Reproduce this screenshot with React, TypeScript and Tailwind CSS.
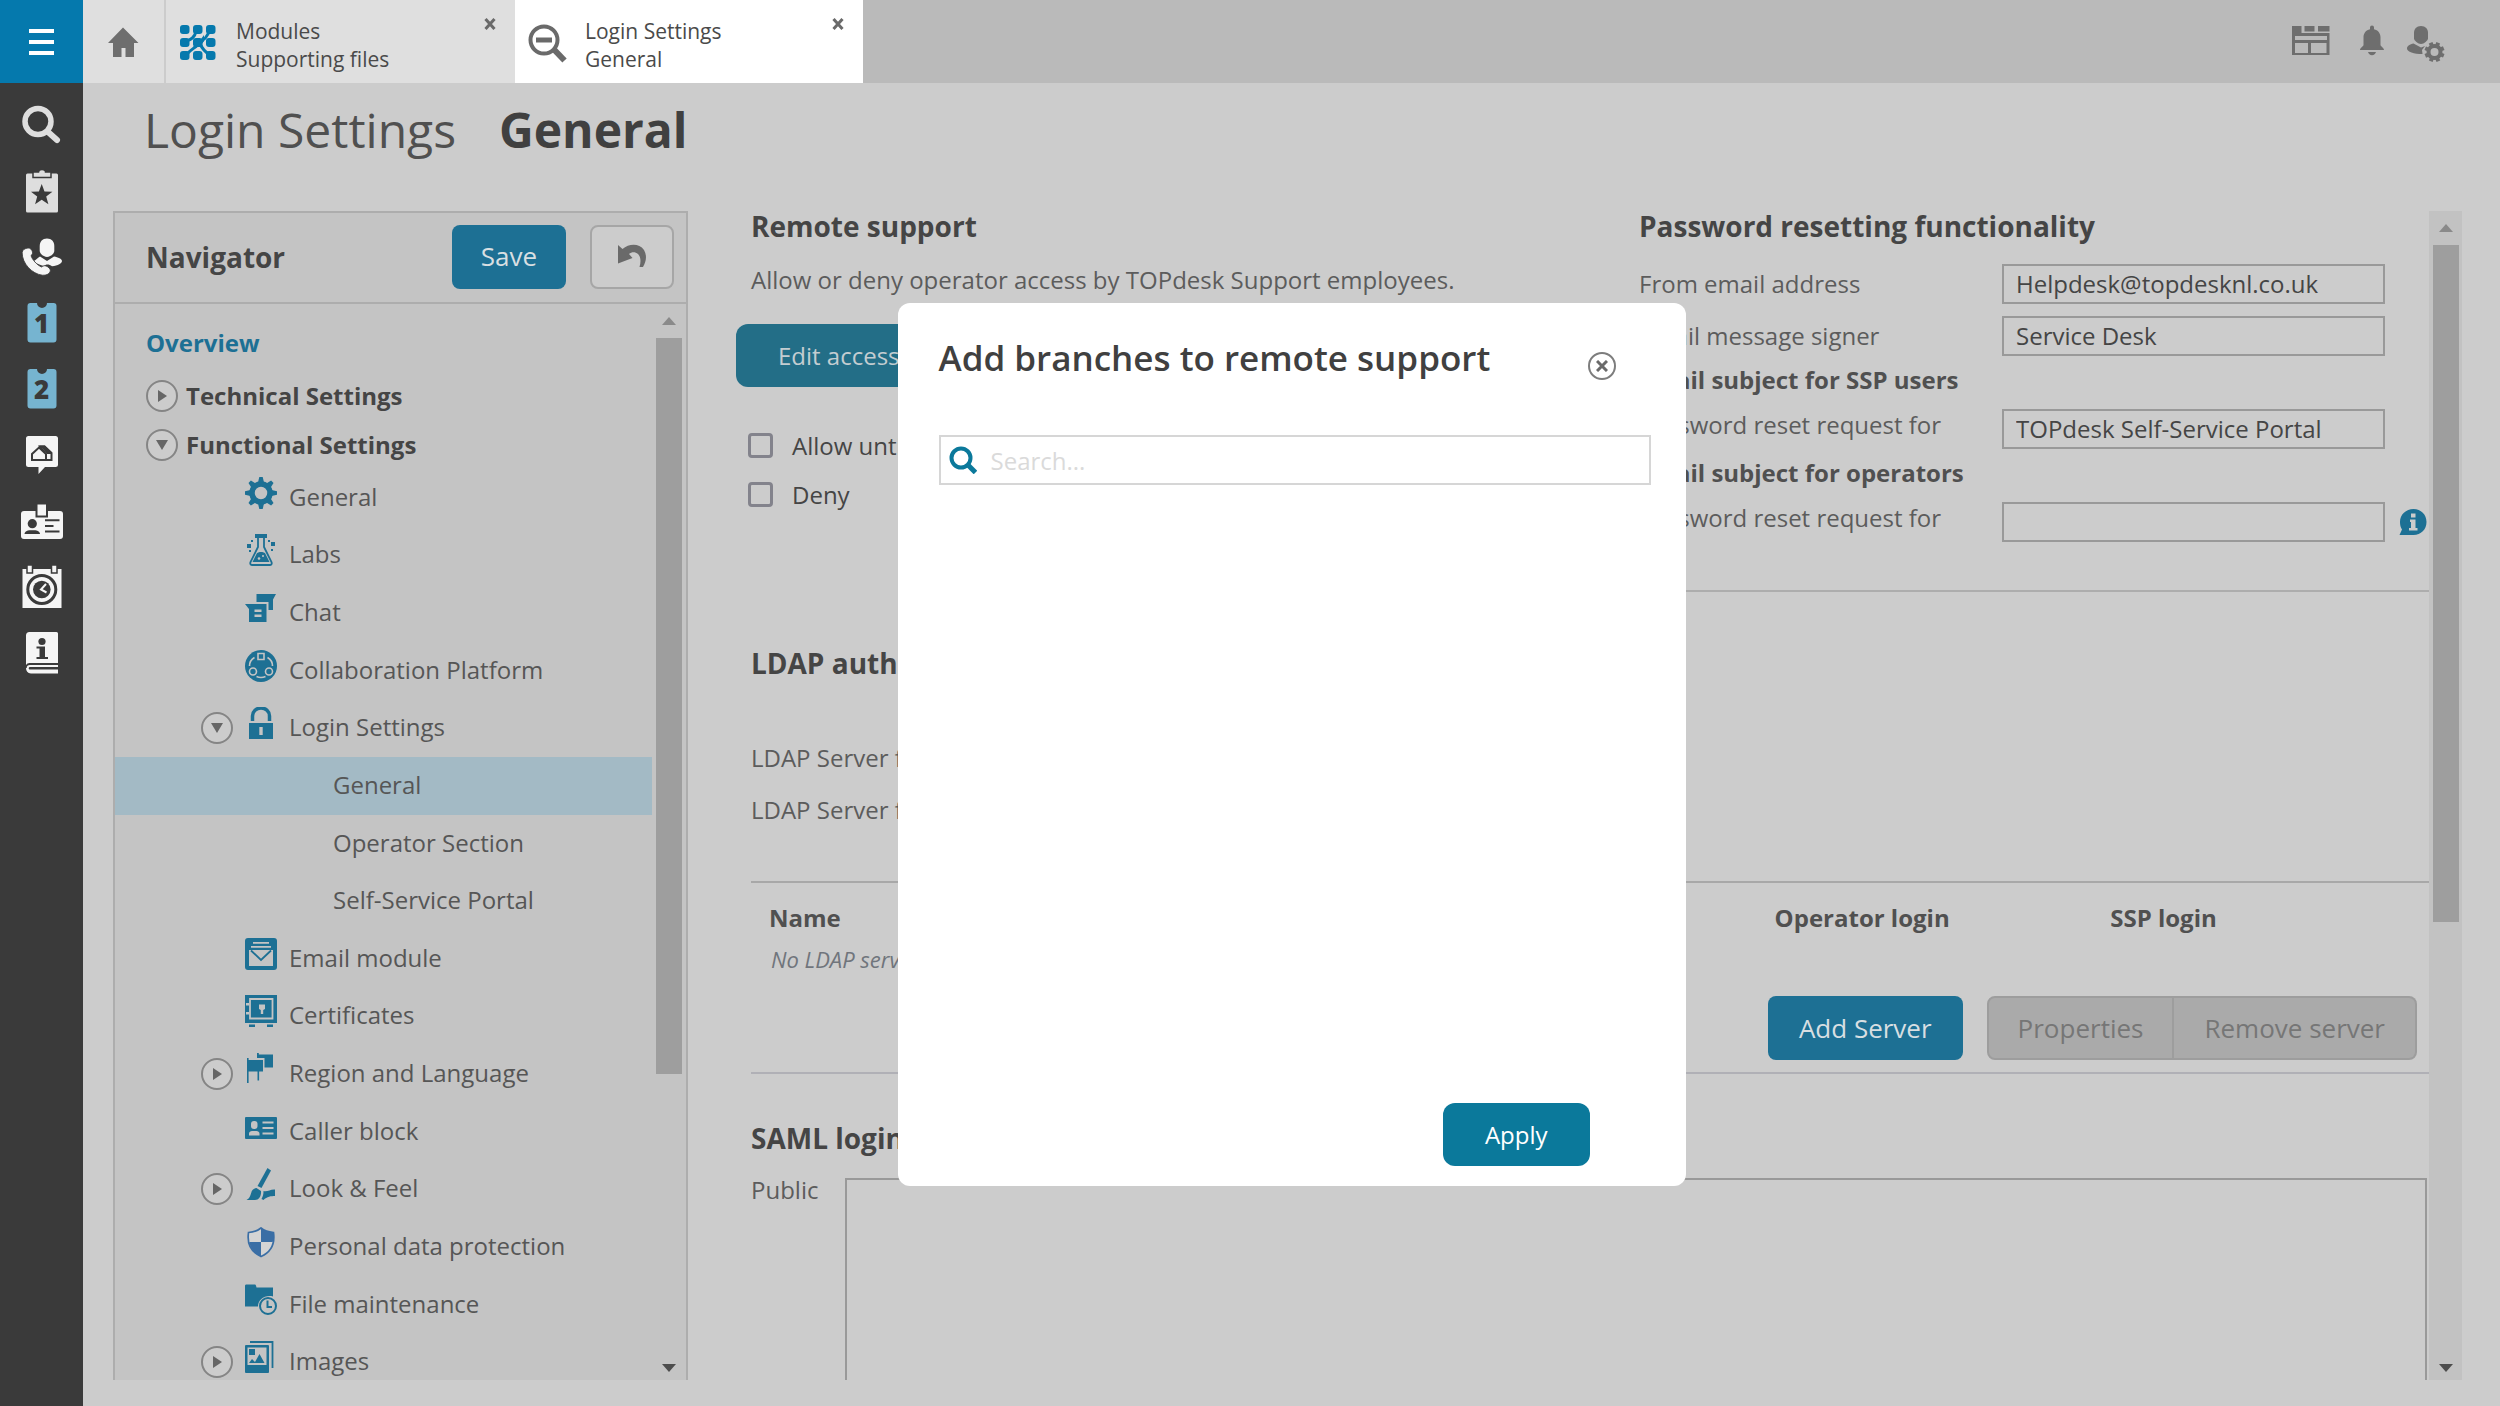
import React, { useState } from 'react';

const Svg = ({ size, className, children }: { size: number; className?: string; children: React.ReactNode }) => (
  <svg viewBox={`0 0 ${size} ${size}`} width={size} height={size} fill="currentColor" className={`shrink-0 ${className ?? ''}`} aria-hidden="true">
    {children}
  </svg>
);

const DARK = '#3a3a3a';
const PANEL = '#c4c4c4';

/* ---------- Left rail icons (44px grid) ---------- */

const ticketPath = 'M10.500 2H17a5 5 0 0 0 10 0h6.500a3 3 0 0 1 3 3v33.500a3 3 0 0 1-3 3h-23a3 3 0 0 1-3-3V5a3 3 0 0 1 3-3z';

const Ticket = ({ label }: { label: string }) => (
  <>
    <path d={ticketPath} />
    <text x="21.500" y="32" textAnchor="middle" fontSize="26" fontWeight="800" fill={DARK}>{label}</text>
  </>
);

const railItems = [
  {
    name: 'Search',
    color: 'text-[#dedede]',
    icon: (
      <g fill="none" stroke="currentColor">
        <circle cx="18" cy="18.500" r="13" strokeWidth="5.500" />
        <path d="M27.500 28.500l9.500 8.500" strokeWidth="6" strokeLinecap="round" />
      </g>
    ),
  },
  {
    name: 'Bookmarks',
    color: 'text-[#dedede]',
    icon: (
      <>
        <rect x="6" y="4.500" width="32" height="39" rx="1.500" />
        <path d="M13 3h5.500a3.500 2.500 0 0 1 7 0H31v5.500H13z" stroke={DARK} strokeWidth="1.500" />
        <path d="M21.700 15l2.800 7.400 7.900.3-6.200 4.900 2.200 7.700-6.700-4.500-6.600 4.500 2.100-7.700-6.200-4.900 7.900-.3z" fill={DARK} />
      </>
    ),
  },
  {
    name: 'Call management',
    color: 'text-[#f5f5f5]',
    icon: (
      <>
        <path d="M27 3.500c4.500 0 7.300 3 7.300 7.500v5c0 2.500-4 6-7.300 6s-7.300-3.500-7.300-6v-5c0-4.500 2.800-7.500 7.300-7.500z" />
        <path d="M20 21.500l7 4.500 7-4.500c4 .8 8 2.300 8 4.500s-4 5-10 5.200c-3-2.400-6-2.200-8.500-.2-4-1.500-7.500-2.500-9.500-5 2-1.300 4-3.500 6-4.500z" />
        <path d="M8 13c1.800-.3 4 1.500 4.500 4 .3 1.700-.3 2.700-1.500 3.500 1 4 6 9.500 10.500 11.500 1.800-1.500 4-1.700 6-.3 2.300 1.500 3.500 3.300 2.500 5.300-1 2.200-4 3.500-7.500 3.200C12 39 2 28.500 2.200 17.500 2.500 14.700 5 13.400 8 13z" stroke={DARK} strokeWidth="0.800" />
      </>
    ),
  },
  { name: 'First line', color: 'text-[#76b4d0]', icon: <Ticket label="1" /> },
  { name: 'Second line', color: 'text-[#76b4d0]', icon: <Ticket label="2" /> },
  {
    name: 'Facilities',
    color: 'text-[#f5f5f5]',
    icon: (
      <>
        <path d="M8.500 3h27a2.500 2.500 0 0 1 2.500 2.500v26a2.500 2.500 0 0 1-2.500 2.500H25l-6.500 7v-7h-10A2.500 2.500 0 0 1 6 31.500v-26A2.500 2.500 0 0 1 8.500 3z" />
        <path d="M12 27v-6l7-6.500 7 6.500v6zM26 27v-6l-6-7.500h4.500L31.500 20v7z" fill="none" stroke={DARK} strokeWidth="2" />
        <path d="M19 12.500h6l6.500 6.500v2H27l-5-6z" fill={DARK} />
      </>
    ),
  },
  {
    name: 'Visitors',
    color: 'text-[#f5f5f5]',
    icon: (
      <>
        <rect x="1" y="12" width="42" height="28" rx="3" />
        <rect x="16.500" y="4.500" width="10.500" height="13" stroke={DARK} strokeWidth="2" />
        <g fill={DARK}>
          <circle cx="12.300" cy="24.700" r="4.600" />
          <path d="M4.500 35c0-2.500 3-3.800 5.500-3.800h4.500c2.500 0 5.500 1.300 5.500 3.800z" />
          <path d="M25 20.300h14.500v2H25zM25 26h8.500v2H25zM25 31.500h14.500v2H25z" />
        </g>
      </>
    ),
  },
  {
    name: 'Planning',
    color: 'text-[#f5f5f5]',
    icon: (
      <>
        <path d="M2.500 4h39v39h-39z" />
        <path d="M7 0h5.500v8H7zM31.500 0H37v8h-5.500z" stroke={DARK} strokeWidth="1.500" />
        <circle cx="21.800" cy="24.500" r="14" fill="none" stroke={DARK} strokeWidth="3" />
        <circle cx="21.800" cy="24.500" r="8.800" fill={DARK} />
        <path d="M26 19l-5 5.500 5.500 3" fill="none" stroke="currentColor" strokeWidth="2" />
      </>
    ),
  },
  {
    name: 'Knowledge base',
    color: 'text-[#f5f5f5]',
    icon: (
      <>
        <path d="M9.500 1h27A1.500 1.500 0 0 1 38 2.500V32H9.500a4 4 0 0 0-3.500 2V4.500A3.500 3.500 0 0 1 9.500 1z" />
        <path d="M38 35H10a2.300 2.300 0 0 0 0 4.600h28M38 41.500H11a4.500 4.500 0 0 1-4-4.500" fill="none" stroke="currentColor" strokeWidth="2" />
        <g fill={DARK}>
          <circle cx="22" cy="10.500" r="3.600" />
          <path d="M16.500 15.500H25V26h3v2H16.500v-2h3v-8.500h-3z" />
        </g>
      </>
    ),
  },
];

/* ---------- Navigator icons (32px grid) ---------- */

const treeIcons: Record<string, React.ReactNode> = {
  gear: (
    <>
      <circle cx="16" cy="16" r="9" fill="none" stroke="currentColor" strokeWidth="5.500" />
      {[0, 45, 90, 135, 180, 225, 270, 315].map(a => (
        <path key={a} d="M13 5.500L14.300 0h3.400L19 5.500z" transform={`rotate(${a} 16 16)`} />
      ))}
    </>
  ),
  labs: (
    <>
      <path d="M10 0h12v4H10z" />
      <path d="M13 4v9L5.500 28c-.7 1.800.2 3 1.800 3h17.400c1.600 0 2.500-1.200 1.800-3L19 13V4" fill="none" stroke="currentColor" strokeWidth="1.800" />
      <path d="M12 19c2-1.500 6-1.500 8 0l4.500 9h-17z" />
      <circle cx="14" cy="24.500" r="1.300" fill={PANEL} />
      <circle cx="18" cy="22" r="1" fill={PANEL} />
      <path d="M2 10h4v4H2zM26 8h4v4h-4zM6 6h2v2H6zM23 6h2v2h-2zM4 16h2v2H4zM26 15h2v2h-2z" />
    </>
  ),
  chat: (
    <>
      <path d="M11.500 2H31l-3 5.500V18h-4.500V10h-12z" />
      <path d="M0 12h21.500v18H4V17z" />
      <path d="M9.500 17.500h7v2.500h-7zM9.500 22.500h7V25h-7z" fill={PANEL} />
    </>
  ),
  collab: (
    <>
      <circle cx="16" cy="16" r="16" />
      <g fill="none" stroke={PANEL} strokeWidth="1.600">
        <path d="M13 3.500h6v6h-6zM9.500 7.500C6 9.500 4.500 13 4.500 16M22.500 7.500C26 9.500 27.500 13 27.500 16M11.500 26.500c3 1.300 6 1.300 9 0" />
        <circle cx="8" cy="21.500" r="3.500" />
        <circle cx="24" cy="21.500" r="3.500" />
      </g>
    </>
  ),
  lock: (
    <>
      <path d="M7.500 14V9a8.500 8 0 0 1 17 0v5" fill="none" stroke="currentColor" strokeWidth="3.500" />
      <path d="M4 16h24v16H4z" />
      <path d="M14.300 20h3.400v8h-3.400z" fill={PANEL} />
    </>
  ),
  email: (
    <>
      <rect width="32" height="32" rx="3" />
      <path d="M8 4h16v1.800H8zM6 8h20v1.800H6zM4 12h24v16H4z" fill={PANEL} />
      <path d="M6 12.500l10 9.500 10-9.500" fill="none" stroke="currentColor" strokeWidth="1.800" />
    </>
  ),
  safe: (
    <>
      <path d="M0 0h32v28H0z" />
      <path d="M5 4h22.500v19.500H5z" fill="none" stroke={PANEL} strokeWidth="1.800" />
      <path d="M1 8h3v2.500H1zM1 17h3v2.500H1zM14 9.500h6v4.500l-1.800 1v4h-2.400v-4L14 14z" fill={PANEL} />
      <path d="M4 29.500h6V32H4zM22 29.500h6V32h-6z" />
    </>
  ),
  flags: (
    <>
      <path d="M12 0h1.800v1.500H28v13h-8.500V5H12z" />
      <path d="M2 5h1.600v2H18v11.500H3.600V30H2zM12.500 18.500h1.600v9h-1.600z" />
    </>
  ),
  card: (
    <>
      <rect y="6" width="32" height="22" rx="1" />
      <g fill={PANEL}>
        <rect x="6" y="10" width="6.500" height="8" rx="3" />
        <path d="M4 24.500v-2c0-1.500 1.500-2.500 3-2.500h4.500c1.500 0 3 1 3 2.500v2zM17.500 10.500h11v2h-11zM17.500 16h11v2h-11zM17.500 21.500h11v2h-11z" />
      </g>
    </>
  ),
  brush: (
    <>
      <path d="M22.500 0L26 2.500 16.500 20 12.500 18z" />
      <path d="M11.500 20l4.500 3c.5 5-2 9-6 9H1.500c3-1.500 3.500-3.500 4.500-6.500.8-3.500 2.500-5 5.500-5.500z" />
      <path d="M18.500 23c4 1 7-2 11.500-1.500V28c-4 0-8 .5-11.500 4l-2-1c1.500-2.500 2-5 2-8z" />
    </>
  ),
  shield: (
    <>
      <path d="M16 2c3.500 3 7.500 4.200 12.500 4.500C30 17 26 26 16 30.500 6 26 2 17 3.500 6.500 8.500 6.200 12.500 5 16 2z" fill="#d4d4d4" stroke="#3a6ea5" strokeWidth="1.700" />
      <path d="M16 2c3.500 3 7.500 4.200 12.500 4.500.4 3.700 0 6.500-.8 9.500H16zM16 16v14.500C9 27.500 5.500 22.500 4.200 16z" fill="#3a6ea5" />
    </>
  ),
  folder: (
    <>
      <path d="M0 2c0-1 .5-1.500 1.500-1.500h8c1 0 1.500.5 2 3H28v9c-8-2-15 3-15 10H0z" />
      <circle cx="23" cy="22" r="8" fill="none" stroke="currentColor" strokeWidth="2" />
      <path d="M22.500 16.500V23H27" fill="none" stroke="currentColor" strokeWidth="2" />
    </>
  ),
  images: (
    <>
      <path d="M5 1h22.500v26" fill="none" stroke="currentColor" strokeWidth="1.800" />
      <rect y="4" width="24" height="28" rx="1" />
      <path d="M2.500 6.500h19V24h-19z" fill={PANEL} />
      <path d="M4 8h6v6H4zM4 22l3-4 3 3 4.500-8 5 9z" />
    </>
  ),
};

interface TreeItem {
  label: string;
  icon?: string;
  state?: 'open' | 'closed';
  selected?: boolean;
}

const treeItems: TreeItem[] = [
  { label: 'General', icon: 'gear' },
  { label: 'Labs', icon: 'labs' },
  { label: 'Chat', icon: 'chat' },
  { label: 'Collaboration Platform', icon: 'collab' },
  { label: 'Login Settings', icon: 'lock', state: 'open' },
  { label: 'General', selected: true },
  { label: 'Operator Section' },
  { label: 'Self-Service Portal' },
  { label: 'Email module', icon: 'email' },
  { label: 'Certificates', icon: 'safe' },
  { label: 'Region and Language', icon: 'flags', state: 'closed' },
  { label: 'Caller block', icon: 'card' },
  { label: 'Look & Feel', icon: 'brush', state: 'closed' },
  { label: 'Personal data protection', icon: 'shield' },
  { label: 'File maintenance', icon: 'folder' },
  { label: 'Images', icon: 'images', state: 'closed' },
];

const Toggle = ({ open, label }: { open: boolean; label: string }) => (
  <button aria-label={`Toggle ${label}`} aria-expanded={open} className="flex size-8 shrink-0 items-center justify-center rounded-full border-2 border-[#858585] bg-[#cccccc] text-[#666666]">
    <Svg size={12}>
      {open ? <path d="M0 1h12L6 11z" /> : <path d="M2 0v12l9-6z" />}
    </Svg>
  </button>
);

const Arrow = ({ down }: { down?: boolean }) => (
  <svg viewBox="0 0 14 8" width="14" height="8" fill={down ? '#4d4d4d' : '#8a8a8a'} aria-hidden="true">
    {down ? <path d="M0 0h14L7 8z" /> : <path d="M7 0l7 8H0z" />}
  </svg>
);

const Rail = () => (
  <aside className="flex w-[83px] shrink-0 flex-col bg-[#3a3a3a]">
    <button aria-label="Menu" className="flex h-[83px] flex-col items-center justify-center gap-[7px] bg-[#0579ad]">
      <span className="h-1 w-[25px] bg-white" />
      <span className="h-1 w-[25px] bg-white" />
      <span className="h-1 w-[25px] bg-white" />
    </button>
    <nav className="flex flex-col pt-[9px]">
      {railItems.map(item => (
        <a key={item.name} href="#" aria-label={item.name} className={`flex h-[66px] items-center justify-center ${item.color}`}>
          <Svg size={44}>{item.icon}</Svg>
        </a>
      ))}
    </nav>
  </aside>
);

const CloseTab = ({ label }: { label: string }) => (
  <button aria-label={label} className="mt-[18px] mr-[19px] size-3 text-[#6a6a6a]">
    <Svg size={12}>
      <path d="M1.500 1l9 10M10.500 1l-9 10" stroke="currentColor" strokeWidth="3" />
    </Svg>
  </button>
);

const TopBar = () => (
  <header className="flex h-[83px] shrink-0 bg-[#bababa] text-[21px] leading-7 text-[#4a4a4a]">
    <a href="#" aria-label="Home" className="flex w-[83px] items-center justify-center border-r-2 border-[#cccccc] bg-[#dfdfdf] text-[#6e6e6e]">
      <Svg size={32}>
        <path d="M15 1.500L30.500 17H26v14h-8.500v-9h-4v9H5V17H0z" />
      </Svg>
    </a>
    <div className="flex w-[349px] items-start bg-[#dfdfdf]">
      <Svg size={36} className="mt-6 ml-[14px] text-[#0579ad]">
        {[0, 1, 2].map(col => [0, 1, 2].map(row => (
          <rect key={`${col}-${row}`} x={col * 13} y={row * 13 + 1} width="9.500" height="9" rx="3" />
        )))}
        <path d="M16 7.500c-1 5-5 9-10 9.500M31 6c-3 2-4 8-8 10l-4 3c-2 4-8 6-12 11M20 20c2 4 5 8 9 10" fill="none" stroke="currentColor" strokeWidth="3" />
        <path d="M14 15h7l3-4v6l-2 3 2 5-5-3-7 4 2-4z" />
      </Svg>
      <a href="#" className="mt-[17px] ml-5 flex flex-1 flex-col">
        <span>Modules</span>
        <span>Supporting files</span>
      </a>
      <CloseTab label="Close Modules" />
    </div>
    <div className="flex w-[348px] items-start bg-white">
      <Svg size={40} className="mt-6 ml-[13px] text-[#6a6a6a]">
        <circle cx="16" cy="16" r="13.500" fill="none" stroke="currentColor" strokeWidth="4" />
        <path d="M8 13.500h16v5H8z" />
        <path d="M26 25.500l10.500 11" stroke="currentColor" strokeWidth="6" />
      </Svg>
      <a href="#" className="mt-[17px] ml-[17px] flex flex-1 flex-col">
        <span>Login Settings</span>
        <span>General</span>
      </a>
      <CloseTab label="Close Login Settings" />
    </div>
    <div className="ml-auto flex items-start gap-7 pt-6 pr-[54px] text-[#6e6e6e]">
      <button aria-label="Layout">
        <Svg size={40}>
          <path d="M2 2h9.500v7H39.500v22H2zM5 12v4h32v-4zM5 19v10h13V19zM21 19v10h15.500V19z" fillRule="evenodd" />
          <path d="M14.500 2h10v5.500h-10zM28 2h11.500v5.500H28z" />
        </Svg>
      </button>
      <button aria-label="Notifications">
        <svg viewBox="0 0 28 40" width="28" height="40" fill="currentColor" aria-hidden="true">
          <path d="M12 3.500a2 2 0 0 1 4 0v1.700c4 .8 6.500 4 6.500 8V21c0 1.500 3.500 2.500 3.500 5H2c0-2.500 3.500-3.500 3.500-5v-7.800c0-4 2.500-7.200 6.500-8zM10 28h8c-.5 2-2 3.200-4 3.200S10.500 30 10 28z" />
        </svg>
      </button>
      <button aria-label="User settings" className="-ml-2">
        <Svg size={40}>
          <path d="M15 2c4.500 0 7 3 7 7v5.500c0 2-4 5.500-7 5.500s-7-3.500-7-5.500V9c0-4 2.500-7 7-7z" />
          <path d="M7.500 19.500l7.500 4 4-1.500-3 4 .5 4C8 30 1 28 1 24.500c0-2.500 3-4.200 6.500-5z" />
          <circle cx="28.500" cy="28" r="6" fill="none" stroke="currentColor" strokeWidth="4" />
          {[0, 45, 90, 135, 180, 225, 270, 315].map(a => (
            <path key={a} d="M26.500 18h4v4h-4z" transform={`rotate(${a + 22} 28.500 28)`} />
          ))}
        </Svg>
      </button>
    </div>
  </header>
);

const Navigator = () => (
  <section className="flex w-[575px] shrink-0 flex-col border-2 border-b-0 border-[#adadad] bg-[#c4c4c4]">
    <div className="flex h-[91px] shrink-0 items-center border-b-2 border-[#adadad] pr-3 pb-[2px] pl-[31px]">
      <h2 className="flex-1 text-[28px] font-bold text-[#454545]">Navigator</h2>
      <button className="h-16 rounded-lg bg-[#1d7094] px-[29px] text-[26px] text-[#d8dfe2]">Save</button>
      <button aria-label="Undo" className="ml-6 flex h-16 w-[84px] items-center justify-center rounded-lg border-2 border-[#a6a6a6] bg-[#cccccc] text-[#6a6a6a]">
        <Svg size={28}>
          <path d="M0 2l4.500 4C11 .5 21 0 26 7c3 5 2.500 11-1 17h-3.500c1.500-5 1.500-10-1.500-13-3-2.500-6.500-2-9 0l3.500 4L0 20.500z" />
        </Svg>
      </button>
    </div>
    <div className="flex min-h-0 flex-1">
      <nav className="min-w-0 flex-1 overflow-hidden pt-[10px] text-2xl text-[#565656]">
        <a href="#" className="flex h-[58px] items-center pl-[31px] font-bold text-[#1d7094]">Overview</a>
        <div className="flex h-12 items-center gap-2 pl-[31px] font-bold text-[#454545]">
          <Toggle open={false} label="Technical Settings" />
          <a href="#">Technical Settings</a>
        </div>
        <div className="flex h-[49px] items-center gap-2 pl-[31px] font-bold text-[#454545]">
          <Toggle open label="Functional Settings" />
          <a href="#">Functional Settings</a>
        </div>
        <ul className="grid h-[922px] auto-rows-fr">
          {treeItems.map((item, i) => (
            <li key={i} className={`flex items-center pl-[86px] ${item.selected ? 'bg-[#a3bac5]' : ''}`}>
              <span className="w-11 shrink-0">
                {item.state && <Toggle open={item.state === 'open'} label={item.label} />}
              </span>
              {item.icon ? (
                <>
                  <Svg size={32} className="mb-[10px] text-[#1d7094]">{treeIcons[item.icon]}</Svg>
                  <a href="#" className="ml-3 pb-[2px]">{item.label}</a>
                </>
              ) : (
                <a href="#" className="ml-[88px] pb-[2px]">{item.label}</a>
              )}
            </li>
          ))}
        </ul>
      </nav>
      <div className="mr-1 ml-1 flex w-[26px] flex-col items-center">
        <div className="flex h-[34px] items-center"><Arrow /></div>
        <div className="w-full flex-[8] bg-[#9e9e9e]" />
        <div className="flex-[3]" />
        <div className="flex h-[30px] items-end pb-2"><Arrow down /></div>
      </div>
    </div>
  </section>
);

interface FieldProps {
  id: string;
  label: string;
  value: string;
  raised?: boolean;
  info?: boolean;
}

const Field = ({ id, label, value, raised, info }: FieldProps) => (
  <div className="flex h-10 items-center">
    <label htmlFor={id} className={`w-[363px] shrink-0 ${raised ? 'pb-2' : ''}`}>{label}</label>
    <input id={id} defaultValue={value} className="h-10 w-[383px] border-2 border-[#999999] bg-transparent px-3 pb-[2px] text-[#454545]" />
    {info && (
      <button aria-label="More information" className="ml-[14px] text-[#1d7094]">
        <Svg size={28}>
          <path d="M14.500 1C22 1 27.500 6.500 27.500 14S22 27 14.500 27H.5l2.500-5.500C1.500 19 1 17 1 14 1 6.500 7 1 14.500 1z" />
          <path d="M12 5.500h4.500v4H12zM11 11.500h5.500V20h2v2.500H10V20h2v-6h-1z" fill="#cccccc" />
        </Svg>
      </button>
    )}
  </div>
);

const Content = () => (
  <section className="flex min-w-0 flex-1 flex-col text-2xl text-[#5c5c5c]">
    <div className="flex shrink-0 items-start">
      <div className="min-w-0 flex-1">
        <h2 className="pl-[15px] text-[28px] leading-[30px] font-bold text-[#454545]">Remote support</h2>
        <p className="mt-[23px] pl-[15px] leading-8">Allow or deny operator access by TOPdesk Support employees.</p>
        <button className="mt-7 h-[63px] rounded-xl bg-[#236e87] px-[42px] text-[#c3cdd1]">Edit access</button>
        <div className="mt-[34px] pl-3 text-[#454545]">
          <label className="flex h-[49px] items-center gap-[19px]">
            <input type="checkbox" className="size-[25px] appearance-none rounded-sm border-3 border-[#83838c]" />
            Allow until
          </label>
          <label className="flex h-[49px] items-center gap-[19px]">
            <input type="checkbox" className="size-[25px] appearance-none rounded-sm border-3 border-[#83838c]" />
            Deny
          </label>
        </div>
      </div>
      <div className="w-[790px] shrink-0 border-b-2 border-[#adadad] pb-12">
        <h2 className="text-[28px] leading-[30px] font-bold text-[#454545]">Password resetting functionality</h2>
        <div className="mt-[23px] flex flex-col gap-3">
          <Field id="from" label="From email address" value="Helpdesk@topdesknl.co.uk" />
          <Field id="signer" label="Email message signer" value="Service Desk" />
        </div>
        <h3 className="flex h-[53px] items-center pb-[6px] font-bold text-[#505050]">Email subject for SSP users</h3>
        <Field id="ssp" label="Password reset request for" value="TOPdesk Self-Service Portal" raised />
        <h3 className="flex h-[53px] items-center pb-[6px] font-bold text-[#505050]">Email subject for operators</h3>
        <Field id="operators" label="Password reset request for" value="" raised info />
      </div>
    </div>

    <div className="mt-[55px] ml-[15px] shrink-0 border-b-2 border-[#b0b0b6] pb-3">
      <h2 className="text-[28px] leading-8 font-bold text-[#454545]">LDAP authentication</h2>
      <p className="mt-[53px] leading-[52px]">LDAP Server for operators</p>
      <p className="leading-[52px]">LDAP Server for SSP users</p>
      <table className="mt-[45px] w-full table-fixed border-t-2 border-[#a8a8a8] text-left">
        <thead>
          <tr className="h-[57px] text-[#505050]">
            <th className="pt-[14px] pl-[18px] font-bold">Name</th>
            <th className="w-[20%] pt-[14px] font-bold">Operator login</th>
            <th className="w-[19%] pt-[14px] font-bold">SSP login</th>
          </tr>
        </thead>
        <tbody>
          <tr className="h-10 text-[22px] text-[#70757c] italic">
            <td colSpan={3} className="pl-5 leading-8">No LDAP servers</td>
          </tr>
        </tbody>
      </table>
      <div className="mt-[17px] flex justify-end pr-3 text-[26px]">
        <button className="mr-6 h-16 rounded-lg bg-[#1d7094] px-[31px] text-[#d8dfe2]">Add Server</button>
        <button disabled className="h-16 rounded-l-lg border-2 border-[#9d9d9d] bg-[#aaaaaa] px-[29px] text-[#767676]">Properties</button>
        <button disabled className="h-16 rounded-r-lg border-2 border-l-0 border-[#9d9d9d] bg-[#aaaaaa] px-[30px] text-[#767676]">Remove server</button>
      </div>
    </div>

    <h2 className="mt-12 ml-[15px] text-[28px] leading-8 font-bold text-[#454545]">SAML login</h2>
    <div className="mt-6 mr-[2px] ml-[15px] flex min-h-0 flex-1">
      <label htmlFor="public" className="w-[94px] shrink-0 leading-6">Public</label>
      <textarea id="public" className="flex-1 resize-none border-2 border-b-0 border-[#999999] bg-transparent" />
    </div>
  </section>
);

const BranchDialog = ({ onClose }: { onClose: () => void }) => (
  <div className="absolute inset-0 flex items-center justify-center">
    <div role="dialog" aria-labelledby="dialog-title" className="flex h-[883px] w-[788px] flex-col rounded-xl bg-white pt-9 pr-[35px] pb-5 pl-[41px]">
      <div className="flex h-[41px] items-end justify-between pr-[35px]">
        <h2 id="dialog-title" className="pb-[2px] text-[35px] leading-10 font-semibold text-[#404040]">Add branches to remote support</h2>
        <button aria-label="Close" onClick={onClose} className="flex size-7 items-center justify-center rounded-full border-2 border-[#7d7d7d] text-[#6a6a6a]">
          <Svg size={12}>
            <path d="M1 1l10 10M11 1L1 11" stroke="currentColor" strokeWidth="3" />
          </Svg>
        </button>
      </div>
      <label className="mt-[55px] flex h-[50px] items-center gap-[14px] border-2 border-[#d6d6d6] pl-2">
        <Svg size={28} className="text-[#0b799b]">
          <g fill="none" stroke="currentColor" strokeWidth="4">
            <circle cx="12" cy="12" r="9.500" />
            <path d="M18.500 18.500l8 8" strokeWidth="5" />
          </g>
        </Svg>
        <input aria-label="Search branches" placeholder="Search..." className="h-full flex-1 text-2xl text-[#454545] outline-none placeholder:text-[#dadada]" />
      </label>
      <button className="mt-auto mr-[61px] h-[63px] self-end rounded-xl bg-[#0b799b] px-[42px] text-2xl text-white">Apply</button>
    </div>
  </div>
);

const App: React.FC = () => {
  const [isDialogOpen, setIsDialogOpen] = useState(true);

  return (
    <div className="flex h-screen overflow-hidden bg-[#cccccc] font-['Open_Sans',sans-serif]">
      <Rail />
      <div className="flex min-w-0 flex-1 flex-col">
        <TopBar />
        <main className="relative flex min-h-0 flex-1 flex-col">
          <h1 className="flex h-32 shrink-0 items-center gap-[43px] pb-[34px] pl-[61px] text-5xl text-[#505050]">
            <span>Login Settings</span>
            <strong className="font-bold text-[#404040]">General</strong>
          </h1>
          <div className="flex min-h-0 flex-1 pr-[38px] pb-[26px] pl-[30px]">
            <Navigator />
            <div className="w-12 shrink-0" />
            <Content />
            <div className="flex w-[33px] shrink-0 flex-col items-center bg-[#c2c2c2]">
              <div className="flex h-[34px] items-center"><Arrow /></div>
              <div className="w-[26px] flex-[19] bg-[#9e9e9e]" />
              <div className="flex-[12]" />
              <div className="flex h-[30px] items-end pb-2"><Arrow down /></div>
            </div>
          </div>
          {isDialogOpen && <BranchDialog onClose={() => setIsDialogOpen(false)} />}
        </main>
      </div>
    </div>
  );
};

export default App;
